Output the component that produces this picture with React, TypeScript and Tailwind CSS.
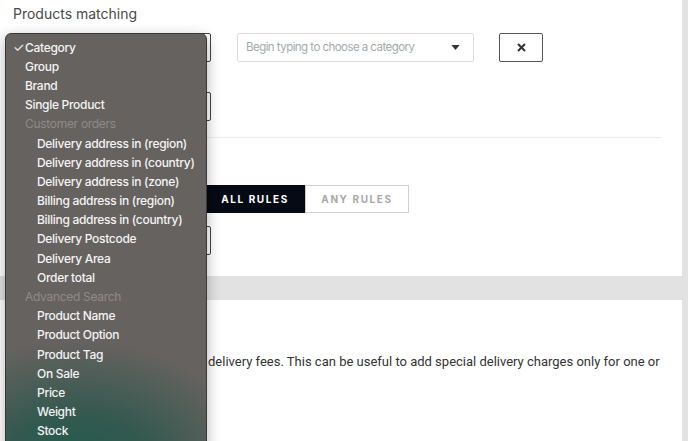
const MENU: { label: string; kind: "item" | "header" | "sub"; checked?: boolean }[] = [
  { label: "Category", kind: "item", checked: true },
  { label: "Group", kind: "item" },
  { label: "Brand", kind: "item" },
  { label: "Single Product", kind: "item" },
  { label: "Customer orders", kind: "header" },
  { label: "Delivery address in (region)", kind: "sub" },
  { label: "Delivery address in (country)", kind: "sub" },
  { label: "Delivery address in (zone)", kind: "sub" },
  { label: "Billing address in (region)", kind: "sub" },
  { label: "Billing address in (country)", kind: "sub" },
  { label: "Delivery Postcode", kind: "sub" },
  { label: "Delivery Area", kind: "sub" },
  { label: "Order total", kind: "sub" },
  { label: "Advanced Search", kind: "header" },
  { label: "Product Name", kind: "sub" },
  { label: "Product Option", kind: "sub" },
  { label: "Product Tag", kind: "sub" },
  { label: "On Sale", kind: "sub" },
  { label: "Price", kind: "sub" },
  { label: "Weight", kind: "sub" },
  { label: "Stock", kind: "sub" },
];

function Caret({ w = 10, h = 6 }: { w?: number; h?: number }) {
  return (
    <svg width={w} height={h} viewBox="0 0 10 6" className="text-[#333]">
      <path d="M0 0h10L5 6z" fill="currentColor" />
    </svg>
  );
}

function PlainSelect() {
  return (
    <div className="w-[200px] h-[29px] border border-[#444] rounded-[2px] bg-white flex items-center justify-end pr-2">
      <Caret />
    </div>
  );
}

export default function App() {
  return (
    <div className="relative w-[688px] h-[441px] overflow-hidden bg-[#e2e2e2] font-['Inter',sans-serif]">
      <div className="w-[682px] flex flex-col gap-[24px]">
        {/* rules panel */}
        <div className="h-[276px] bg-white pl-[13px] pr-[20px] pt-[5px]">
          <div className="text-[14px] leading-[18px] text-[#4a4a4a]">Products matching</div>
          <div className="mt-[10px] flex items-center">
            <div className="-ml-[2px]">
              <PlainSelect />
            </div>
            <div className="ml-[26px] w-[237px] h-[29px] border border-[#dcdcdc] rounded-[2px] flex items-center justify-between pl-[8px] pr-[13px]">
              <span className="text-[11.5px] tracking-[-0.55px] text-[#a3abab]">Begin typing to choose a category</span>
              <Caret w={9} h={5} />
            </div>
            <button className="ml-[25px] w-[44px] h-[29px] border border-[#555] rounded-[2px] flex items-center justify-center">
              <svg width="9" height="9" viewBox="0 0 9 9">
                <path d="M1 1l7 7M8 1L1 8" stroke="#333" strokeWidth="2" />
              </svg>
            </button>
          </div>
          <div className="mt-[30px] -ml-[2px]">
            <PlainSelect />
          </div>
          <div className="mt-[16px] border-t border-[#ececec]" />
          <div className="mt-[47px] ml-[192px] flex">
            <div className="w-[100px] h-[28px] bg-[#050a14] text-white text-[10px] font-bold tracking-[0.16em] flex items-center justify-center">
              ALL RULES
            </div>
            <div className="w-[104px] h-[28px] border border-[#cfcfcf] text-[#a8a8a8] text-[10px] font-bold tracking-[0.16em] flex items-center justify-center">
              ANY RULES
            </div>
          </div>
          <div className="mt-[13px] -ml-[2px]">
            <PlainSelect />
          </div>
        </div>

        {/* description panel */}
        <div className="h-[200px] bg-white pl-[16px] pt-[20px]">
          <div className="text-[15px] font-semibold text-[#222]">Delivery rules</div>
          <p className="mt-[9px] w-[664px] text-[13px] leading-[19px] text-[#333] font-['Roboto',sans-serif]">
            Use these rules to add additional delivery fees. This can be useful to add special delivery charges only for one or more products.
          </p>
        </div>
      </div>

      {/* native select popup */}
      <div className="absolute left-[5px] top-[33px] w-[202px] h-[440px] rounded-t-[6px] border border-[#3b3938] shadow-[0_4px_14px_rgba(0,0,0,0.3)] bg-[radial-gradient(ellipse_90%_30%_at_35%_100%,#1d5a4c_0%,#34594f_45%,#666260_100%)] pt-[4px]">
        {MENU.map((m) => (
          <div
            key={m.label}
            className={`relative h-[19.2px] flex items-center text-[12px] tracking-[-0.3px] ${
              m.kind === "header" ? "pl-[19px] text-[#8f8b88]" : m.kind === "sub" ? "pl-[31px] text-[#f4f4f4] font-medium" : "pl-[19px] text-[#f4f4f4] font-medium"
            }`}
          >
            {m.checked && <span className="absolute left-[7px] text-[13px] font-normal">✓</span>}
            {m.label}
          </div>
        ))}
      </div>
    </div>
  );
}
